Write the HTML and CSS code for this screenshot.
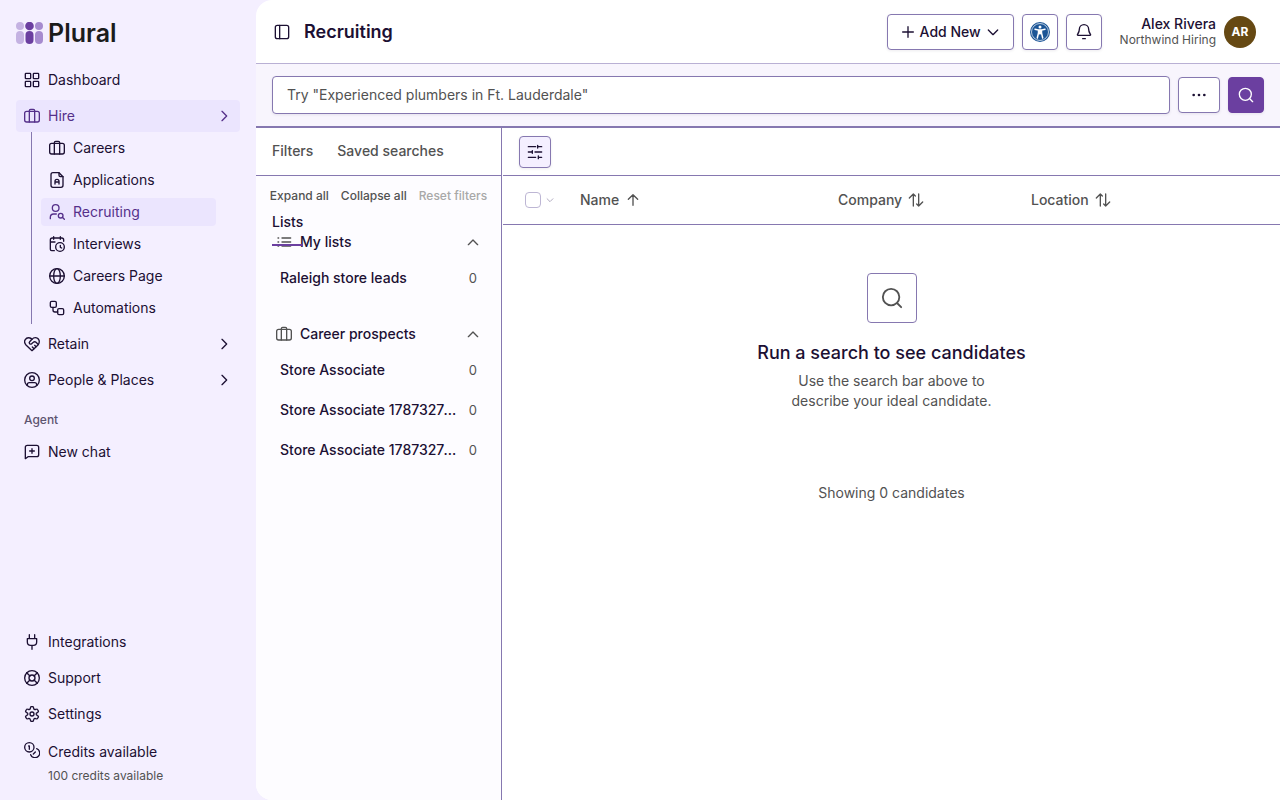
FILE: index.html
```html
<!DOCTYPE html>
<html lang="en">
<head>
    <meta charset="UTF-8">
    <meta name="viewport" content="width=device-width, initial-scale=1.0">
    <title>Recruiting</title>
    <link rel="stylesheet" href="styles.css">
</head>
<body>

    <!-- Shared icons -->
    <svg class="sprite" aria-hidden="true">
        <symbol id="briefcase" viewBox="0 0 24 24"><path d="M16 21V4a2 2 0 0 0-2-2h-4a2 2 0 0 0-2 2v17"/><rect x="1" y="5" width="22" height="16" rx="3"/></symbol>
        <symbol id="chevron-right" viewBox="0 0 24 24"><path d="m9 19 7-7-7-7"/></symbol>
        <symbol id="chevron-down" viewBox="0 0 24 24"><path d="m5 9 7 7 7-7"/></symbol>
        <symbol id="chevron-up" viewBox="0 0 24 24"><path d="m5 16 7-7 7 7"/></symbol>
        <symbol id="search" viewBox="0 0 24 24"><circle cx="11" cy="11" r="9"/><path d="m22 22-4-4"/></symbol>
        <symbol id="sort" viewBox="0 0 24 24"><path d="M8 21V3M2 9l6-6M8 3l3 3M16 3v18M22 15l-6 6M16 21l-3-3"/></symbol>
    </svg>

    <div class="app">
        <!-- Sidebar -->
        <aside class="sidebar">
            <a class="logo" href="#">
                <svg width="28" height="22" viewBox="0 0 28 22" aria-hidden="true">
                    <g fill="#c4b2e2"><circle cx="4" cy="4" r="4"/><rect y="9" width="8" height="13" rx="4"/></g>
                    <g fill="#6b3fa0"><circle cx="13.5" cy="4" r="4.3"/><rect x="9.5" y="9" width="8" height="13" rx="4"/></g>
                    <g fill="#a68bcf"><circle cx="23" cy="4" r="4"/><rect x="19" y="9" width="8" height="13" rx="4"/></g>
                </svg>
                <span>Plural</span>
            </a>

            <nav class="nav">
                <a class="nav-item" href="#">
                    <svg class="icon" viewBox="0 0 24 24"><rect x="2" y="2" width="8" height="8" rx="1"/><rect x="14" y="2" width="8" height="8" rx="1"/><rect x="2" y="14" width="8" height="8" rx="1"/><rect x="14" y="14" width="8" height="8" rx="1"/></svg>
                    Dashboard
                </a>
                <a class="nav-item active" href="#">
                    <svg class="icon"><use href="#briefcase"/></svg>
                    Hire
                    <svg class="icon arrow"><use href="#chevron-right"/></svg>
                </a>
                <div class="subnav">
                    <a class="nav-item" href="#"><svg class="icon"><use href="#briefcase"/></svg>Careers</a>
                    <a class="nav-item" href="#">
                        <svg class="icon" viewBox="0 0 24 24"><path d="M15 1H6a3 3 0 0 0-3 3v16a3 3 0 0 0 3 3h12a3 3 0 0 0 3-3V7z"/><path d="M15 1v4a2 2 0 0 0 2 2h4M9 18v-4a3 3 0 0 1 6 0v4M9 15h6"/></svg>
                        Applications
                    </a>
                    <a class="nav-item active" href="#">
                        <svg class="icon" viewBox="0 0 24 24"><circle cx="10" cy="6" r="5"/><path d="M11 15H7a5 5 0 0 0-5 5v2"/><circle cx="17.500" cy="17.500" r="3.500"/><path d="m23 23-3-3"/></svg>
                        Recruiting
                    </a>
                    <a class="nav-item" href="#">
                        <svg class="icon" viewBox="0 0 24 24"><path d="M22 8V6a3 3 0 0 0-3-3H5a3 3 0 0 0-3 3v14a2 2 0 0 0 2 2h4M17 1v4M7 1v4M2 9h7M17 14v3l2 1"/><circle cx="16.500" cy="16.500" r="6.500"/></svg>
                        Interviews
                    </a>
                    <a class="nav-item" href="#">
                        <svg class="icon" viewBox="0 0 24 24"><circle cx="12" cy="12" r="11"/><ellipse cx="12" cy="12" rx="5" ry="11"/><path d="M1 12h22"/></svg>
                        Careers Page
                    </a>
                    <a class="nav-item" href="#">
                        <svg class="icon" viewBox="0 0 24 24"><rect x="2" y="2" width="9" height="9" rx="2"/><path d="M6 11v4a3 3 0 0 0 3 3h4"/><rect x="13" y="13" width="9" height="9" rx="2"/></svg>
                        Automations
                    </a>
                </div>
                <a class="nav-item" href="#">
                    <svg class="icon" viewBox="0 0 24 24"><path d="M12 22 3 13.500C-2 8 3 1 9 3c1.500.5 3 2 3 2s2-2.500 5-2.500c5 0 8 6 4 11z"/><path d="m12 5-3.500 3.500a2 2 0 0 0 3 3L14 9.500a3 3 0 0 1 4 0l3 3M18 16l-2-2M15 19l-2.500-2.500"/></svg>
                    Retain
                    <svg class="icon arrow"><use href="#chevron-right"/></svg>
                </a>
                <a class="nav-item" href="#">
                    <svg class="icon" viewBox="0 0 24 24"><circle cx="12" cy="12" r="11"/><circle cx="12" cy="9.500" r="3.500"/><path d="M5 20v-1a3 3 0 0 1 3-3h8a3 3 0 0 1 3 3v1"/></svg>
                    People &amp; Places
                    <svg class="icon arrow"><use href="#chevron-right"/></svg>
                </a>
            </nav>

            <h2 class="nav-label">Agent</h2>
            <a class="nav-item" href="#">
                <svg class="icon" viewBox="0 0 24 24"><path d="M2 22V5a3 3 0 0 1 3-3h14a3 3 0 0 1 3 3v11a3 3 0 0 1-3 3H6zM12 7v7M8.500 10.500h7"/></svg>
                New chat
            </a>

            <nav class="nav nav-bottom">
                <a class="nav-item" href="#">
                    <svg class="icon" viewBox="0 0 24 24"><path d="M12 23v-6M8 7V1M16 7V1M5 7h14v5a5 5 0 0 1-5 5h-4a5 5 0 0 1-5-5z"/></svg>
                    Integrations
                </a>
                <a class="nav-item" href="#">
                    <svg class="icon" viewBox="0 0 24 24"><circle cx="12" cy="12" r="11"/><circle cx="12" cy="12" r="4.500"/><path d="m4 4 5 5M15 9l5-5M15 15l5 5M9 15l-5 5"/></svg>
                    Support
                </a>
                <a class="nav-item" href="#">
                    <svg class="icon" viewBox="0 0 24 24"><path d="M9.500 3.500 10 2a1 1 0 0 1 1-1h2a1 1 0 0 1 1 1l.5 1.500a2 2 0 0 0 3 1.500l1.500-.3a1 1 0 0 1 1.200.5l1.300 2.200a1 1 0 0 1-.2 1.300l-1 1.200a2 2 0 0 0 0 4.200l1 1.200a1 1 0 0 1 .2 1.300l-1.300 2.200a1 1 0 0 1-1.200.5l-1.500-.3a2 2 0 0 0-3 1.500L14 22a1 1 0 0 1-1 1h-2a1 1 0 0 1-1-1l-.5-1.500a2 2 0 0 0-3-1.500l-1.500.3a1 1 0 0 1-1.200-.5l-1.300-2.200a1 1 0 0 1 .2-1.300l1-1.200a2 2 0 0 0 0-4.200l-1-1.200a1 1 0 0 1-.2-1.300l1.300-2.200A1 1 0 0 1 5 4.700l1.500.3a2 2 0 0 0 3-1.500z"/><circle cx="12" cy="12" r="3"/></svg>
                    Settings
                </a>
            </nav>
            <div class="credits">
                <svg class="icon" viewBox="0 0 24 24"><circle cx="8" cy="8" r="7"/><path d="M7 6h1v5M19 10a7 7 0 1 1-9 9M17 15l-3 3"/></svg>
                <div>
                    <p>Credits available</p>
                    <p class="small">100 credits available</p>
                </div>
            </div>
        </aside>

        <!-- Main area -->
        <main class="main">
            <header class="header">
                <button class="plain-btn" aria-label="Toggle sidebar">
                    <svg class="icon" viewBox="0 0 24 24"><rect x="2" y="2" width="20" height="20" rx="3"/><path d="M8.500 2v20"/></svg>
                </button>
                <h1>Recruiting</h1>
                <div class="header-actions">
                    <button class="btn">
                        <svg class="icon" viewBox="0 0 24 24"><path d="M4 12h16M12 4v16"/></svg>
                        Add New
                        <svg class="icon"><use href="#chevron-down"/></svg>
                    </button>
                    <button class="btn square" aria-label="Accessibility">
                        <svg width="20" height="20" viewBox="0 0 20 20"><circle cx="10" cy="10" r="10" fill="#1b5596"/><circle cx="10" cy="10" r="8.500" fill="none" stroke="#fff" stroke-width=".7"/><circle cx="10" cy="5" r="1.500" fill="#fff"/><path d="M5 7.200 8.500 8v3L7.300 16M15 7.200 11.500 8v3l1.200 5M10 8v4" fill="none" stroke="#fff" stroke-width="1.500" stroke-linecap="round"/><path d="M8.300 7.500h3.400V12H8.300z" fill="#fff"/></svg>
                    </button>
                    <button class="btn square" aria-label="Notifications">
                        <svg class="icon" viewBox="0 0 24 24"><path d="M3.500 17c-2 0-1.500-1-.8-2C4.500 12.500 5 11 5 8a7 7 0 0 1 14 0c0 3 .5 4.500 2.300 7 .7 1 1.200 2-.8 2zM10 22h4"/></svg>
                    </button>
                    <div class="user">
                        <div class="user-text">
                            <p class="user-name">Alex Rivera</p>
                            <p class="user-org">Northwind Hiring</p>
                        </div>
                        <span class="avatar">AR</span>
                    </div>
                </div>
            </header>

            <form class="search-bar">
                <input type="text" aria-label="Search candidates" placeholder="Try &quot;Experienced plumbers in Ft. Lauderdale&quot;">
                <button class="btn more" type="button" aria-label="More options">
                    <svg class="icon dots" viewBox="0 0 24 24"><circle cx="4" cy="12" r="2"/><circle cx="12" cy="12" r="2"/><circle cx="20" cy="12" r="2"/></svg>
                </button>
                <button class="btn square primary" type="submit" aria-label="Search">
                    <svg class="icon"><use href="#search"/></svg>
                </button>
            </form>

            <div class="content">
                <!-- Filters panel -->
                <section class="panel">
                    <div class="tabs" role="tablist">
                        <button class="tab" role="tab">Filters</button>
                        <button class="tab" role="tab">Saved searches</button>
                        <button class="tab selected" role="tab" aria-selected="true">Lists</button>
                    </div>
                    <div class="panel-actions">
                        <button>Expand all</button>
                        <button>Collapse all</button>
                        <button disabled>Reset filters</button>
                    </div>

                    <div class="group">
                        <button class="group-title">
                            <svg class="icon gray" viewBox="0 0 24 24"><path d="M9 6h13M9 12h13M9 18h13M3 6h1M3 12h1M3 18h1"/></svg>
                            My lists
                            <svg class="icon arrow gray"><use href="#chevron-up"/></svg>
                        </button>
                        <a class="list-item" href="#"><span class="list-name">Raleigh store leads</span><span class="count">0</span></a>
                    </div>

                    <div class="group">
                        <button class="group-title">
                            <svg class="icon gray"><use href="#briefcase"/></svg>
                            Career prospects
                            <svg class="icon arrow gray"><use href="#chevron-up"/></svg>
                        </button>
                        <a class="list-item" href="#"><span class="list-name">Store Associate</span><span class="count">0</span></a>
                        <a class="list-item" href="#"><span class="list-name">Store Associate 1787327401</span><span class="count">0</span></a>
                        <a class="list-item" href="#"><span class="list-name">Store Associate 1787327402</span><span class="count">0</span></a>
                    </div>
                </section>

                <!-- Results -->
                <section class="results">
                    <div class="toolbar">
                        <button class="btn filter-btn" aria-label="Toggle filters">
                            <svg class="icon" viewBox="0 0 24 24"><path d="M2 4h11M17 4h5M16 2v4M2 12h5M8 10v4M12 12h10M2 20h11M18 20h4M17 18v4"/></svg>
                        </button>
                    </div>
                    <table class="results-table">
                        <thead>
                            <tr>
                                <th class="col-check">
                                    <div class="th">
                                        <input type="checkbox" aria-label="Select all">
                                        <svg class="icon tiny"><use href="#chevron-down"/></svg>
                                    </div>
                                </th>
                                <th class="col-name"><div class="th">Name <svg class="icon" viewBox="0 0 24 24"><path d="M12 20V4M5 11l7-7 7 7"/></svg></div></th>
                                <th class="col-company"><div class="th">Company <svg class="icon"><use href="#sort"/></svg></div></th>
                                <th><div class="th">Location <svg class="icon"><use href="#sort"/></svg></div></th>
                            </tr>
                        </thead>
                    </table>
                    <div class="empty">
                        <div class="empty-icon"><svg class="icon"><use href="#search"/></svg></div>
                        <h2>Run a search to see candidates</h2>
                        <p>Use the search bar above to describe your ideal candidate.</p>
                    </div>
                    <p class="showing">Showing 0 candidates</p>
                </section>
            </div>
        </main>
    </div>

</body>
</html>
```
FILE: styles.css
```css
* {
    box-sizing: border-box;
}
body {
    margin: 0;
    background-color: #f4efff;
    color: #1c1033;
    font-family: Inter, "Liberation Sans", sans-serif;
    font-size: 14px;
    line-height: 20px;
}
h1, h2, p {
    margin: 0;
}
a {
    color: inherit;
    text-decoration: none;
}
button {
    font: inherit;
    color: inherit;
    background: none;
    border: none;
    padding: 0;
    cursor: pointer;
}
.sprite {
    display: none;
}
.icon {
    width: 16px;
    height: 16px;
    flex-shrink: 0;
    fill: none;
    stroke: currentColor;
    stroke-width: 2;
    stroke-linecap: round;
    stroke-linejoin: round;
}
.gray {
    color: #525252;
}
.arrow {
    margin-left: auto;
}
.app {
    display: flex;
    min-height: 100vh;
}

/* Sidebar */
.sidebar {
    width: 256px;
    flex-shrink: 0;
    display: flex;
    flex-direction: column;
    padding: 16px 16px 14px;
}
.logo {
    display: flex;
    align-items: center;
    gap: 4px;
    height: 34px;
    margin-bottom: 14px;
    color: #1b1b1b;
    font-size: 25px;
    font-weight: 600;
}
.nav {
    display: flex;
    flex-direction: column;
    gap: 4px;
}
.nav-item {
    display: flex;
    align-items: center;
    gap: 8px;
    height: 32px;
    padding: 0 8px;
    border-radius: 4px;
}
.nav-item.active {
    background-color: #ebe5fe;
    color: #55308a;
}
.subnav {
    display: flex;
    flex-direction: column;
    gap: 4px;
    margin: -4px 24px 0 15px;
    padding: 2px 0 2px 9px;
    border-left: 1px solid #8678b0;
}
.subnav .nav-item {
    height: 28px;
}
.nav-label {
    padding: 14px 8px;
    font-size: 12px;
    line-height: 20px;
    font-weight: 500;
    color: #5c5470;
    height: 40px;
}
.nav-bottom {
    margin-top: auto;
}
.credits {
    display: flex;
    gap: 8px;
    padding: 12px 8px 0;
}
.credits .small {
    padding-top: 4px;
    font-size: 12px;
    color: #525252;
}

/* Header */
.main {
    flex: 1;
    min-width: 0;
    display: flex;
    flex-direction: column;
    background-color: #ffffff;
    border-radius: 16px 0 0 16px;
    overflow: hidden;
}
.header {
    display: flex;
    align-items: center;
    height: 64px;
    padding: 0 24px 0 18px;
    border-bottom: 1px solid #b9b0d4;
}
.plain-btn {
    display: flex;
}
h1 {
    margin-left: 14px;
    font-size: 18px;
    font-weight: 600;
}
.header-actions {
    display: flex;
    align-items: center;
    gap: 8px;
    margin-left: auto;
}
.btn {
    display: flex;
    align-items: center;
    justify-content: center;
    gap: 4px;
    height: 36px;
    padding: 0 12px;
    background-color: #ffffff;
    border: 1px solid #8678b0;
    border-radius: 4px;
    font-weight: 500;
    box-shadow: 0 1px 3px rgba(28, 16, 51, 0.08);
}
.btn.square {
    width: 36px;
    padding: 0;
}
.btn.primary {
    background-color: #6b3fa0;
    border-color: #6b3fa0;
    color: #ffffff;
}
.user {
    display: flex;
    align-items: center;
    gap: 8px;
    padding-left: 10px;
}
.user-text {
    text-align: right;
    line-height: 16px;
}
.user-name {
    font-weight: 500;
}
.user-org {
    font-size: 12px;
    color: #525252;
}
.avatar {
    width: 32px;
    border-radius: 50%;
    background-color: #664913;
    color: #ffffff;
    font-size: 12px;
    line-height: 32px;
    font-weight: 700;
    text-align: center;
}

/* Search */
.search-bar {
    display: flex;
    align-items: center;
    gap: 8px;
    height: 64px;
    padding: 0 16px;
    background-color: #f8f5fd;
    border-bottom: 2px solid #8678b0;
}
.search-bar input {
    flex: 1;
    min-width: 0;
    height: 38px;
    padding: 0 14px 2px;
    background-color: #ffffff;
    border: 1px solid #8678b0;
    border-radius: 4px;
    font: inherit;
    color: inherit;
    box-shadow: 0 1px 3px rgba(28, 16, 51, 0.08);
}
.search-bar input::placeholder {
    color: #525252;
    opacity: 1;
}
.dots {
    fill: currentColor;
    stroke: none;
}

/* Filters panel */
.content {
    flex: 1;
    display: flex;
    gap: 1px;
}
.panel {
    width: 246px;
    flex-shrink: 0;
    background-color: #fdfcff;
    border-right: 1px solid #8678b0;
}
.tabs {
    display: flex;
    flex-wrap: wrap;
    align-content: flex-start;
    gap: 24px;
    height: 48px;
    padding: 0 16px;
    background-color: #ffffff;
    border-bottom: 1px solid #8678b0;
}
.tab {
    height: 47px;
    border-bottom: 2px solid transparent;
    font-weight: 500;
    color: #525252;
}
.tab.selected {
    position: relative;
    color: #1c1033;
    border-color: #6b3fa0;
}
.panel-actions {
    display: flex;
    justify-content: center;
    gap: 12px;
    height: 50px;
    padding-top: 10px;
    font-size: 12px;
    font-weight: 500;
    color: #525252;
}
.panel-actions button {
    height: 20px;
    white-space: nowrap;
}
.panel-actions button:disabled {
    color: #a8a8a8;
}
.group {
    padding: 0 20px;
    margin-bottom: 20px;
    font-weight: 500;
}
.group-title {
    display: flex;
    align-items: center;
    gap: 8px;
    width: 100%;
    height: 32px;
}
.list-item {
    display: flex;
    align-items: center;
    justify-content: space-between;
    gap: 8px;
    height: 40px;
    padding: 0 4px;
}
.list-name {
    overflow: hidden;
    white-space: nowrap;
    text-overflow: ellipsis;
}
.count {
    font-size: 13px;
    font-weight: 400;
    color: #525252;
}

/* Results */
.results {
    flex: 1;
    min-width: 0;
}
.toolbar {
    display: flex;
    align-items: center;
    height: 48px;
    padding: 0 16px;
    border-bottom: 1px solid #8678b0;
}
.filter-btn {
    width: 32px;
    height: 32px;
    padding: 0;
    background-color: #f4efff;
}
.results-table {
    width: 100%;
    table-layout: fixed;
    border-collapse: collapse;
    color: #525252;
}
.results-table th {
    height: 48px;
    padding: 0 16px;
    border-bottom: 1px solid #8678b0;
    font-weight: 500;
}
.results-table .col-check {
    width: 61px;
    padding: 0 0 0 22px;
}
.col-name {
    width: 258px;
}
.col-company {
    width: 193px;
}
.th {
    display: flex;
    align-items: center;
    gap: 6px;
}
.col-check .th {
    gap: 4px;
}
.tiny {
    width: 10px;
    height: 10px;
    color: #a29bb5;
}
input[type="checkbox"] {
    appearance: none;
    width: 16px;
    height: 16px;
    margin: 0;
    border: 1px solid #bdb6d4;
    border-radius: 4px;
    background-color: #ffffff;
}
.empty {
    display: flex;
    flex-direction: column;
    align-items: center;
    padding: 48px 16px;
    text-align: center;
}
.empty-icon {
    display: flex;
    align-items: center;
    justify-content: center;
    width: 50px;
    height: 50px;
    margin-bottom: 18px;
    border: 1px solid #8678b0;
    border-radius: 4px;
    color: #525252;
}
.empty-icon .icon {
    width: 22px;
    height: 22px;
}
.empty h2 {
    margin-bottom: 6px;
    font-size: 18px;
    line-height: 24px;
    font-weight: 500;
}
.empty p {
    max-width: 220px;
    color: #525252;
}
.showing {
    padding: 24px 16px;
    text-align: center;
    color: #525252;
}
```
